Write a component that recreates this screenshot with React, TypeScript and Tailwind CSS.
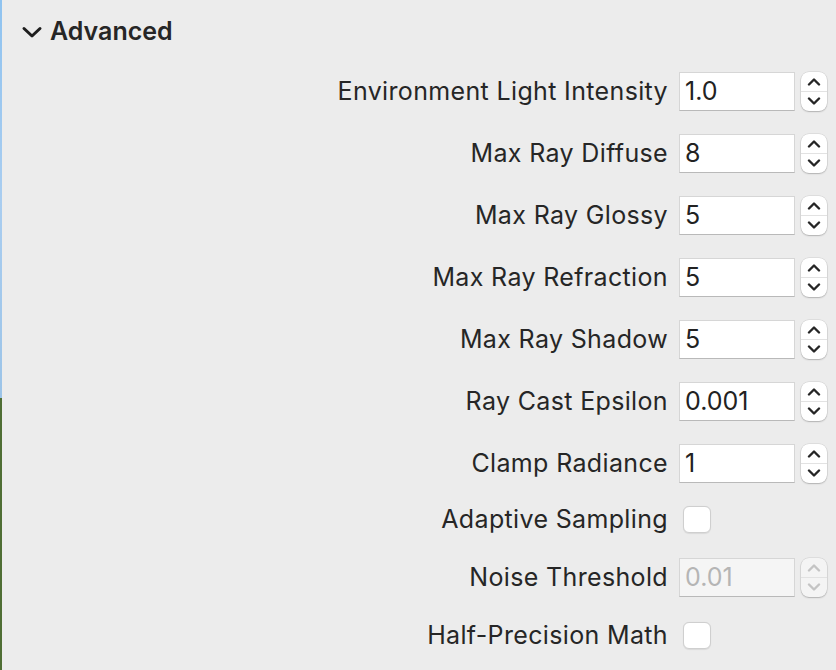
import React from "react";

const font = { fontFamily: "Inter, 'Noto Sans', sans-serif" };

function Stepper({ disabled }: { disabled?: boolean }) {
  const c = disabled ? "#c4c4c4" : "#262626";
  return (
    <div
      className={`flex h-[39px] w-[26px] flex-col items-center rounded-[8px] ${disabled ? "bg-[#f4f4f4]" : "bg-white"} shadow-[0_0_0_0.5px_rgba(0,0,0,0.12),0_1px_1.5px_rgba(0,0,0,0.2)]`}
    >
      <div className="flex h-[19px] items-center justify-center">
        <svg width="14" height="9" viewBox="0 0 14 9">
          <path d="M2 7.5 L7 2.5 L12 7.5" fill="none" stroke={c} strokeWidth="2.4" strokeLinecap="round" strokeLinejoin="round" />
        </svg>
      </div>
      <div className="h-px w-full bg-[#e2e2e2]" />
      <div className="flex h-[19px] items-center justify-center">
        <svg width="14" height="9" viewBox="0 0 14 9">
          <path d="M2 1.5 L7 6.5 L12 1.5" fill="none" stroke={c} strokeWidth="2.4" strokeLinecap="round" strokeLinejoin="round" />
        </svg>
      </div>
    </div>
  );
}

function NumRow({ label, value, disabled, h = 62 }: { label: string; value: string; disabled?: boolean; h?: number }) {
  return (
    <div className="flex items-center justify-end pr-[9px]" style={{ height: h }}>
      <span className="mr-[11px] text-[25px] leading-none tracking-[0.35px] text-[#262626]">{label}</span>
      <div
        className={`mr-[6px] flex h-[39px] w-[116px] items-center border border-[#d6d6d6] border-b-[#b9b9b9] pl-[5px] text-[25px] leading-none ${disabled ? "bg-[#f5f5f5] text-[#b5b5b5]" : "bg-white text-[#222]"}`}
      >
        {value}
      </div>
      <Stepper disabled={disabled} />
    </div>
  );
}

function CheckRow({ label, h }: { label: string; h: number }) {
  return (
    <div className="flex items-center justify-end pr-[125px]" style={{ height: h }}>
      <span className="mr-[15px] text-[25px] leading-none tracking-[0.35px] text-[#262626]">{label}</span>
      <div className="h-[27px] w-[28px] rounded-[6px] border border-[#cfcfcf] bg-white shadow-[0_0.5px_1px_rgba(0,0,0,0.08)]" />
    </div>
  );
}

export default function App() {
  return (
    <div className="flex h-[670px] w-[836px] overflow-hidden bg-[#ececec]" style={font}>
      <div className="flex w-[2px] flex-col">
        <div className="h-[398px] bg-gradient-to-b from-[#8fc3f0] via-[#a9cdf0] to-[#9cc4e8]" />
        <div className="flex-1 bg-[#4f6e35]" />
      </div>
      <div className="flex flex-1 flex-col">
        <div className="flex h-[60px] items-center pt-[3px] pl-[19px]">
          <svg width="22" height="14" viewBox="0 0 22 14" className="mr-[7px]">
            <path d="M3 3.5 L11 11 L19 3.5" fill="none" stroke="#1e1e1e" strokeWidth="3" strokeLinecap="round" strokeLinejoin="round" />
          </svg>
          <span className="text-[25px] font-semibold leading-none text-[#262626]">Advanced</span>
        </div>
        <NumRow label="Environment Light Intensity" value="1.0" />
        <NumRow label="Max Ray Diffuse" value="8" />
        <NumRow label="Max Ray Glossy" value="5" />
        <NumRow label="Max Ray Refraction" value="5" />
        <NumRow label="Max Ray Shadow" value="5" />
        <NumRow label="Ray Cast Epsilon" value="0.001" />
        <NumRow label="Clamp Radiance" value="1" />
        <CheckRow label="Adaptive Sampling" h={51} />
        <NumRow label="Noise Threshold" value="0.01" disabled h={65} />
        <CheckRow label="Half-Precision Math" h={51} />
      </div>
    </div>
  );
}
